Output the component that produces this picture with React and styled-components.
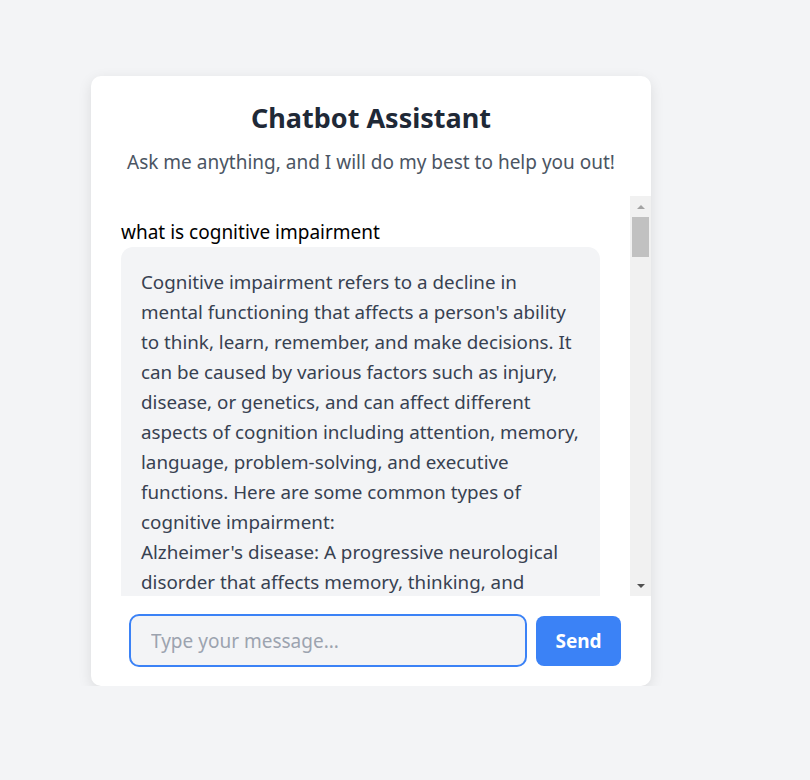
import React from 'react';
import styled, { createGlobalStyle } from 'styled-components';

const messages = [
  { from: 'user', text: 'what is cognitive impairment' },
  {
    from: 'bot',
    text: [
      'Cognitive impairment refers to a decline in',
      "mental functioning that affects a person's ability",
      'to think, learn, remember, and make decisions. It',
      'can be caused by various factors such as injury,',
      'disease, or genetics, and can affect different',
      'aspects of cognition including attention, memory,',
      'language, problem-solving, and executive',
      'functions. Here are some common types of',
      'cognitive impairment:',
      "Alzheimer's disease: A progressive neurological",
      'disorder that affects memory, thinking, and',
      'behavior. It is the most common cause of',
      'dementia.',
    ].join('\n'),
  },
];

const GlobalStyle = createGlobalStyle`
  body {
    margin: 0;
    background: #f3f4f6;
    font-family: "Noto Sans", "Open Sans", sans-serif;
  }
`;

const Page = styled.div`
  padding: 76px 0 0 91px;
`;

const Card = styled.div`
  width: 560px;
  background: #ffffff;
  border-radius: 10px;
  box-shadow: 0 4px 14px rgba(0, 0, 0, 0.1);
  padding-top: 22px;
  overflow: hidden;
`;

const Title = styled.h1`
  margin: 0;
  text-align: center;
  font-size: 27px;
  line-height: 40px;
  font-weight: 700;
  color: #1f2937;
`;

const Subtitle = styled.p`
  margin: 10px 0 0;
  text-align: center;
  font-size: 19px;
  line-height: 28px;
  color: #4b5563;
`;

const ChatArea = styled.div`
  margin-top: 20px;
  height: 400px;
  display: flex;
`;

const MessageList = styled.div`
  flex: 1;
  overflow: hidden;
  padding: 21px 30px 0;
`;

const ScrollTrack = styled.div`
  width: 21px;
  background: #f1f1f1;
  display: flex;
  flex-direction: column;
`;

const ScrollButton = styled.div`
  height: 21px;
  display: flex;
  align-items: center;
  justify-content: center;
  &::before {
    content: '';
    border-left: 4px solid transparent;
    border-right: 4px solid transparent;
    ${(p) =>
      p.$dir === 'up'
        ? 'border-bottom: 4px solid #a3a3a3;'
        : 'border-top: 4px solid #505050;'}
  }
`;

const ScrollSpace = styled.div`
  flex: 1;
  padding: 0 2px;
`;

const Thumb = styled.div`
  height: 40px;
  background: #c1c1c1;
`;

const UserLine = styled.div`
  font-size: 19px;
  line-height: 30px;
  color: #000000;
`;

const Bubble = styled.div`
  padding: 20px;
  background: #f3f4f6;
  border-radius: 12px;
  font-size: 18.8px;
  line-height: 30px;
  color: #374151;
  white-space: pre-line;
`;

const InputRow = styled.form`
  display: flex;
  gap: 9px;
  padding: 18px 30px 19px 38px;
  align-items: center;
`;

const Input = styled.input`
  flex: 1;
  height: 53px;
  box-sizing: border-box;
  border: 2px solid #3b82f6;
  border-radius: 10px;
  background: #f3f4f6;
  padding: 0 20px;
  font-family: inherit;
  font-size: 19px;
  color: #111827;
  caret-color: #000000;
  outline: none;

  &::placeholder {
    color: #9ca3af;
  }
`;

const SendButton = styled.button`
  width: 85px;
  height: 50px;
  border: 0;
  border-radius: 8px;
  background: #3b82f6;
  color: #ffffff;
  font-family: inherit;
  font-size: 19px;
  font-weight: 700;
`;

export default function App() {
  return (
    <>
      <GlobalStyle />
      <Page>
        <Card>
          <Title>Chatbot Assistant</Title>
          <Subtitle>Ask me anything, and I will do my best to help you out!</Subtitle>
          <ChatArea>
            <MessageList>
              {messages.map((m, i) =>
                m.from === 'user' ? (
                  <UserLine key={i}>{m.text}</UserLine>
                ) : (
                  <Bubble key={i}>{m.text}</Bubble>
                )
              )}
            </MessageList>
            <ScrollTrack>
              <ScrollButton $dir="up" />
              <ScrollSpace>
                <Thumb />
              </ScrollSpace>
              <ScrollButton $dir="down" />
            </ScrollTrack>
          </ChatArea>
          <InputRow onSubmit={(e) => e.preventDefault()}>
            <Input placeholder="Type your message..." autoFocus />
            <SendButton type="submit">Send</SendButton>
          </InputRow>
        </Card>
      </Page>
    </>
  );
}
